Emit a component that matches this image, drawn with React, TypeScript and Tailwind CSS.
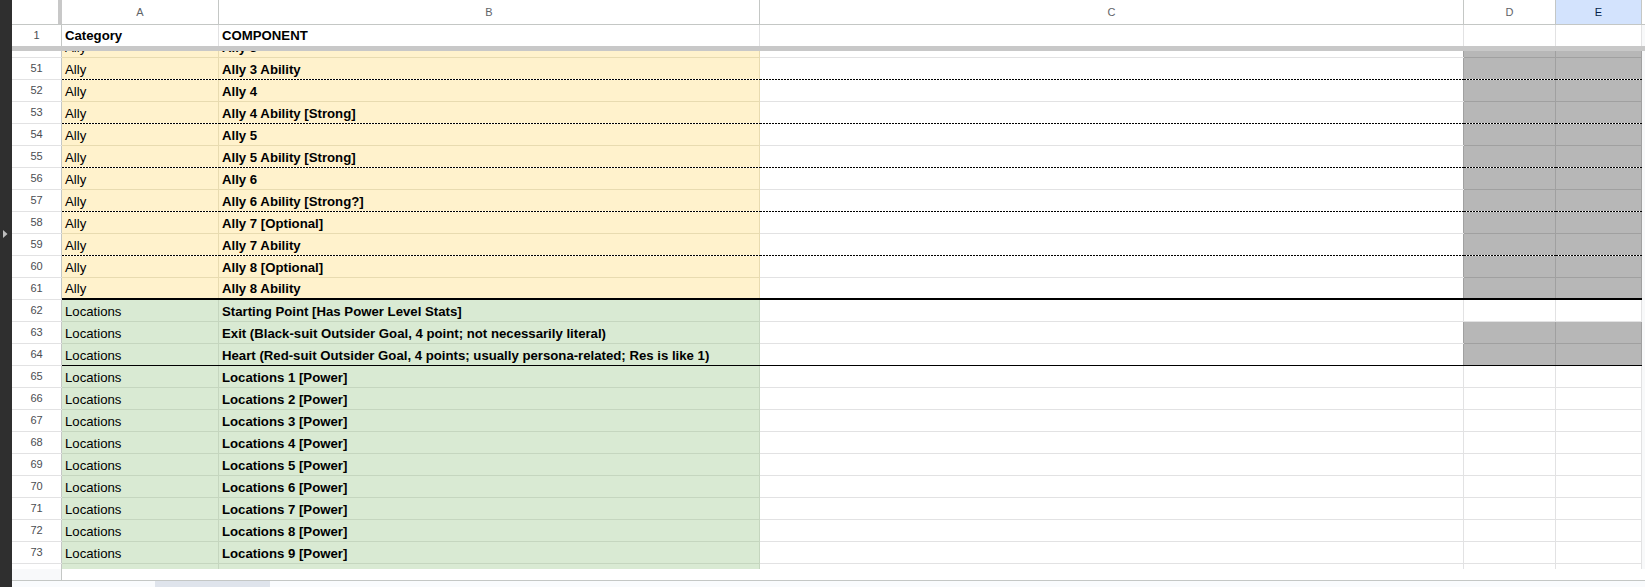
import clsx from "clsx";

type Fill = "y" | "g" | "w" | "k";
type Line = "grid" | "dot" | "thick" | "thin";

type Row = { n: number; a: string; b: string; fa: Fill; de: Fill; line: Line };

const bg: Record<Fill, string> = {
  y: "bg-[#fff2cc]",
  g: "bg-[#d9ead3]",
  w: "bg-white",
  k: "bg-[#b7b7b7]",
};

// gridline colour drawn over each fill
const grid: Record<Fill, string> = {
  y: "bg-[#e8dbb0]",
  g: "bg-[#c5d6bf]",
  w: "bg-[#e2e2e3]",
  k: "bg-[#a0a0a0]",
};

const bottom: Record<Line, string> = {
  grid: "h-px",
  dot: "h-px bg-[repeating-linear-gradient(90deg,#000_0_2px,transparent_2px_3px)]",
  thick: "h-[2px] bg-black",
  thin: "h-px bg-black",
};

const ally: [string, Line][] = [
  ["Ally 3 Ability", "dot"],
  ["Ally 4", "grid"],
  ["Ally 4 Ability [Strong]", "dot"],
  ["Ally 5", "grid"],
  ["Ally 5 Ability [Strong]", "dot"],
  ["Ally 6", "grid"],
  ["Ally 6 Ability [Strong?]", "dot"],
  ["Ally 7 [Optional]", "grid"],
  ["Ally 7 Ability", "dot"],
  ["Ally 8 [Optional]", "grid"],
  ["Ally 8 Ability", "thick"],
];

const rows: Row[] = [
  ...ally.map(([b, line], i) => ({ n: 51 + i, a: "Ally", b, fa: "y" as Fill, de: "k" as Fill, line })),
  { n: 62, a: "Locations", b: "Starting Point [Has Power Level Stats]", fa: "g", de: "w", line: "grid" },
  { n: 63, a: "Locations", b: "Exit (Black-suit Outsider Goal, 4 point; not necessarily literal)", fa: "g", de: "k", line: "grid" },
  {
    n: 64,
    a: "Locations",
    b: "Heart (Red-suit Outsider Goal, 4 points; usually persona-related; Res is like 1)",
    fa: "g",
    de: "k",
    line: "thin",
  },
  ...Array.from({ length: 9 }, (_, i) => ({
    n: 65 + i,
    a: "Locations",
    b: `Locations ${i + 1} [Power]`,
    fa: "g" as Fill,
    de: "w" as Fill,
    line: "grid" as Line,
  })),
];

function Cell({
  w,
  fill,
  edge,
  line,
  bold,
  text,
}: {
  w: string;
  fill: Fill;
  edge: string;
  line: Line;
  bold?: boolean;
  text?: string;
}) {
  return (
    <div className={clsx("flex shrink-0 flex-col", w)}>
      <div className="flex min-h-0 flex-1">
        <div
          className={clsx(
            "flex min-w-0 flex-1 items-end overflow-hidden whitespace-nowrap px-[3px] pb-px text-[13.2px] leading-[16px] text-black",
            bg[fill],
            bold && "font-bold"
          )}
        >
          {text}
        </div>
        <div className={clsx("w-px shrink-0", edge)} />
      </div>
      <div className={clsx("shrink-0", bottom[line], line === "grid" && grid[fill])} />
    </div>
  );
}

function DataRow({ r }: { r: Row }) {
  return (
    <div className="flex h-[22px] shrink-0">
      <div className="flex w-[50px] shrink-0 flex-col bg-white">
        <div className="flex min-h-0 flex-1">
          <div className="flex flex-1 items-center justify-center text-[11px] text-[#4a4d51]">{r.n}</div>
          <div className="w-px bg-[#c4c7c5]" />
        </div>
        <div className="h-px bg-[#e2e2e3]" />
      </div>
      <Cell w="w-[157px]" fill={r.fa} edge={grid[r.fa]} line={r.line} text={r.a} />
      <Cell w="w-[541px]" fill={r.fa} edge={grid[r.fa]} line={r.line} bold text={r.b} />
      <Cell w="w-[704px]" fill="w" edge={grid[r.de]} line={r.line} />
      <Cell w="w-[92px]" fill={r.de} edge={grid[r.de]} line={r.line} />
      <Cell w="w-[86px]" fill={r.de} edge={grid[r.de]} line={r.line} />
      <div className="w-[3px] shrink-0 bg-[#f8f9fa]" />
    </div>
  );
}

function ColumnHeaders() {
  const cols = [
    { l: "A", w: "w-[157px]" },
    { l: "B", w: "w-[541px]" },
    { l: "C", w: "w-[704px]" },
    { l: "D", w: "w-[92px]" },
  ];
  return (
    <div className="flex h-[25px] shrink-0 border-b border-[#c4c7c5] bg-white">
      <div className="w-[50px] shrink-0 border-r-4 border-[#c8c8c8]" />
      {cols.map((c) => (
        <div
          key={c.l}
          className={clsx(
            "flex shrink-0 items-center justify-center border-r border-[#c4c7c5] text-[11px] text-[#5f6368]",
            c.w
          )}
        >
          {c.l}
        </div>
      ))}
      <div className="flex w-[86px] shrink-0 items-center justify-center border-r border-[#c4c7c5] bg-[#d3e3fd] text-[11px] text-[#041e49]">
        E
      </div>
      <div className="w-[3px] shrink-0 bg-white" />
    </div>
  );
}

function FrozenRow() {
  const plain = "flex shrink-0 items-end border-r border-[#e2e2e3] px-[3px] pb-[2px] text-[13.2px] leading-[16px] font-bold text-black";
  return (
    <div className="flex h-[21px] shrink-0 bg-white">
      <div className="flex w-[50px] shrink-0 items-center justify-center border-r border-[#c4c7c5] text-[11px] text-[#4a4d51]">
        1
      </div>
      <div className={clsx(plain, "w-[157px]")}>Category</div>
      <div className={clsx(plain, "w-[541px]")}>COMPONENT</div>
      <div className={clsx(plain, "w-[704px]")} />
      <div className={clsx(plain, "w-[92px]")} />
      <div className={clsx(plain, "w-[86px]")} />
      <div className="w-[3px] shrink-0 bg-[#f8f9fa]" />
    </div>
  );
}

export default function App() {
  return (
    <div className="flex h-[587px] w-[1645px] overflow-hidden bg-white font-['Liberation_Sans',Arial,sans-serif]">
      {/* side panel edge */}
      <div className="flex w-3 shrink-0 flex-col bg-[#2f2f2f] pl-[3px] pt-[230px]">
        <svg width="5" height="8" viewBox="0 0 5 8">
          <path d="M0 0 L4.5 4 L0 8 Z" fill="#bdbdbd" />
        </svg>
      </div>

      <div className="flex min-w-0 flex-1 flex-col">
        <ColumnHeaders />
        <FrozenRow />
        <div className="h-[5px] shrink-0 bg-[#c8c8c8]" />

        {/* row 50, scrolled mostly out of view */}
        <div className="flex h-[7px] shrink-0 flex-col justify-end overflow-hidden">
          <DataRow r={{ n: 50, a: "Ally", b: "Ally 3", fa: "y", de: "k", line: "grid" }} />
        </div>

        {rows.map((r) => (
          <DataRow key={r.n} r={r} />
        ))}

        {/* row 74, cut off by the scrollbar */}
        <div className="flex h-[5px] shrink-0 flex-col overflow-hidden">
          <DataRow r={{ n: 74, a: "Locations", b: "Locations 10 [Power]", fa: "g", de: "w", line: "grid" }} />
        </div>
        <div className="flex h-[11px] shrink-0">
          <div className="w-[50px] shrink-0 border-r border-[#c4c7c5] bg-[#f8f9fa]" />
          <div className="flex-1 bg-white" />
        </div>
        <div className="h-px shrink-0 bg-[#c4c7c5]" />

        {/* sheet tabs */}
        <div className="flex h-[6px] shrink-0 bg-[#f9fbfd] pl-[143px]">
          <div className="w-[115px] bg-[#dfe4ec]" />
        </div>
      </div>
    </div>
  );
}
